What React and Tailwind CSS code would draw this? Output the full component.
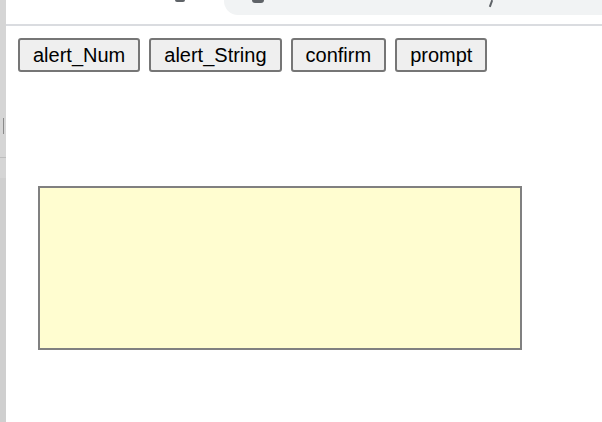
import React from 'react';

const buttons = ['alert_Num', 'alert_String', 'confirm', 'prompt'];

export default function App() {
  return (
    <div className="flex h-[422px] w-[602px] overflow-hidden bg-white" style={{ fontFamily: '"Liberation Sans", Arial, sans-serif' }}>
      {/* window edge on the left */}
      <div className="flex w-[6px] shrink-0 flex-col bg-[#d5d5d5]">
        <div className="h-[118px]" />
        <div className="ml-[3px] h-[16px] w-[1px] bg-[#8a8a8a]" />
        <div className="h-[23px]" />
        <div className="h-[1px] w-full bg-[#bdbdbd]" />
        <div className="h-[20px]" />
        <div className="flex-1 bg-[#cfcfcf]" />
      </div>

      <div className="flex flex-1 flex-col">
        {/* browser chrome, cut off at the top */}
        <div className="relative h-[24px] shrink-0 bg-white">
          <div className="absolute left-[169px] top-0 h-[2px] w-[10px] rounded-b-full bg-[#5f6368]" />
          <div className="absolute left-[218px] right-0 top-0 h-[15px] rounded-bl-[14px] bg-[#f1f3f4]">
            <div className="absolute left-[28px] top-0 h-[3px] w-[12px] rounded-b-full bg-[#5f6368]" />
            <div className="absolute left-[266px] top-0 h-[7px] w-[2px] rotate-[20deg] bg-[#5f6368]" />
          </div>
        </div>
        <div className="h-[2px] shrink-0 bg-[#dadce0]" />

        <div className="flex gap-[9px] pl-[12px] pt-[12px]">
          {buttons.map((b) => (
            <button
              key={b}
              className="h-[34px] rounded-[3px] border-2 border-[#767676] bg-[#efefef] px-[13px] text-[20px] leading-none text-black"
            >
              {b}
            </button>
          ))}
        </div>

        <div className="ml-[32px] mt-[114px] h-[164px] w-[484px] border-2 border-[#808080] bg-[#fffdd0]" />
      </div>
    </div>
  );
}
